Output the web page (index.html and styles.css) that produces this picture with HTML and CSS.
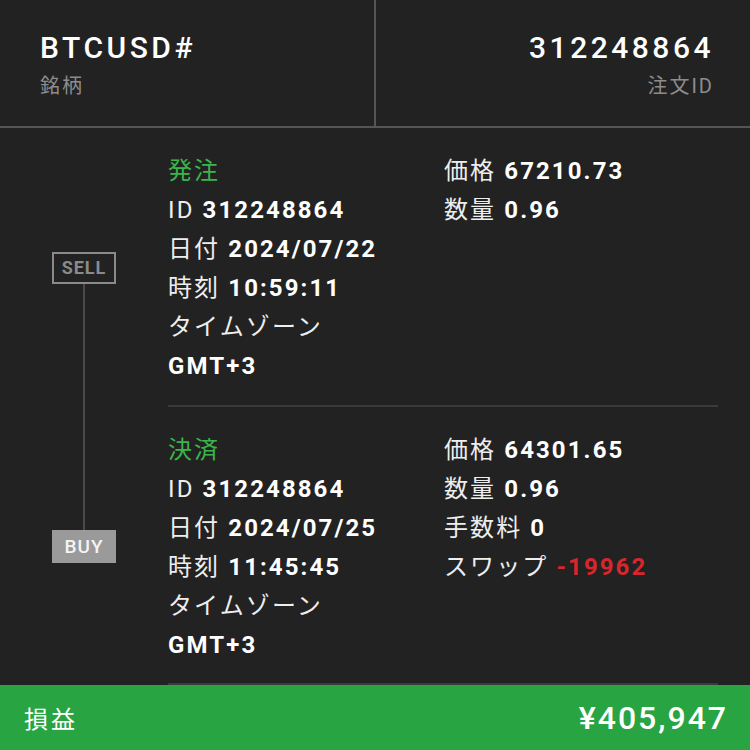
FILE: index.html
```html
<!DOCTYPE html>
<html lang="ja">
<head>
    <meta charset="UTF-8">
    <meta name="viewport" content="width=device-width, initial-scale=1.0">
    <title>注文詳細</title>
    <link rel="stylesheet" href="styles.css">
</head>
<body>
    <div class="order-card">
        <header class="summary">
            <div class="summary-cell">
                <div class="summary-value">BTCUSD#</div>
                <div class="summary-label">銘柄</div>
            </div>
            <div class="summary-cell summary-cell-right">
                <div class="summary-value">312248864</div>
                <div class="summary-label">注文ID</div>
            </div>
        </header>

        <section class="deal deal-open">
            <div class="deal-side">
                <span class="side-tag side-sell">SELL</span>
            </div>
            <div class="deal-body">
                <ul class="deal-col">
                    <li class="deal-title">発注</li>
                    <li>ID <b>312248864</b></li>
                    <li>日付 <b>2024/07/22</b></li>
                    <li>時刻 <b>10:59:11</b></li>
                    <li>タイムゾーン</li>
                    <li><b>GMT+3</b></li>
                </ul>
                <ul class="deal-col">
                    <li>価格 <b>67210.73</b></li>
                    <li>数量 <b>0.96</b></li>
                </ul>
            </div>
        </section>

        <section class="deal deal-close">
            <div class="deal-side">
                <span class="side-tag side-buy">BUY</span>
            </div>
            <div class="deal-body">
                <ul class="deal-col">
                    <li class="deal-title">決済</li>
                    <li>ID <b>312248864</b></li>
                    <li>日付 <b>2024/07/25</b></li>
                    <li>時刻 <b>11:45:45</b></li>
                    <li>タイムゾーン</li>
                    <li><b>GMT+3</b></li>
                </ul>
                <ul class="deal-col">
                    <li>価格 <b>64301.65</b></li>
                    <li>数量 <b>0.96</b></li>
                    <li>手数料 <b>0</b></li>
                    <li>スワップ <b class="negative">-19962</b></li>
                </ul>
            </div>
        </section>

        <footer class="profit-bar">
            <span class="profit-label">損益</span>
            <span class="profit-value">¥405,947</span>
        </footer>
    </div>
</body>
</html>
```

FILE: styles.css
```css
* {
    margin: 0;
    padding: 0;
    box-sizing: border-box;
}

body {
    background-color: #222222;
    color: #f0f0f0;
    font-family: Roboto, "Noto Sans CJK JP", sans-serif;
}

.order-card {
    width: 750px;
    height: 750px;
    display: flex;
    flex-direction: column;
}

/* Header: symbol + order id */
.summary {
    display: flex;
    height: 128px;
    border-bottom: 2px solid #555555;
}

.summary-cell {
    width: 374px;
    padding: 30px 0 0 40px;
}

.summary-cell-right {
    flex: 1;
    border-left: 2px solid #555555;
    padding: 30px 36px 0 0;
    text-align: right;
}

.summary-value {
    font-size: 30px;
    line-height: 36px;
    font-weight: 500;
    letter-spacing: 3.5px;
    color: #ffffff;
}

.summary-label {
    margin-top: 7px;
    font-size: 20px;
    line-height: 26px;
    letter-spacing: 2px;
    color: #8c8c8c;
}

/* Deal sections */
.deal {
    display: flex;
}

.deal-side {
    width: 168px;
    display: flex;
    flex-direction: column;
    align-items: center;
}

.deal-side::before,
.deal-side::after {
    content: "";
    flex: 1;
    width: 2px;
}

.deal-open .deal-side::after,
.deal-close .deal-side::before {
    background-color: #4a4a4a;
}

.side-tag {
    width: 64px;
    display: flex;
    align-items: center;
    justify-content: center;
    font-size: 18px;
    font-weight: 700;
    letter-spacing: 1px;
}

.side-sell {
    height: 32px;
    border: 2px solid #8a8a8a;
    color: #8a8a8a;
}

.side-buy {
    height: 33px;
    background-color: #9a9a9a;
    color: #f4f4f4;
    font-size: 19px;
    font-weight: 500;
}

.deal-body {
    flex: 1;
    margin-right: 32px;
    display: grid;
    grid-template-columns: 276px 1fr;
    padding: 24px 0 19px;
    border-bottom: 2px solid #3a3a3a;
}

.deal-close .deal-body {
    padding-bottom: 18px;
}

.deal-col {
    list-style: none;
    font-size: 24px;
    line-height: 39px;
    letter-spacing: 2.1px;
    color: #eeeeee;
}

.deal-col b {
    font-weight: 700;
    color: #ffffff;
}

.deal-title {
    color: #3cb44b;
}

.deal-col .negative {
    color: #d8262c;
}

/* Profit footer */
.profit-bar {
    flex: 1;
    display: flex;
    justify-content: space-between;
    align-items: center;
    padding: 0 22px 0 24px;
    background-color: #29a443;
    color: #ffffff;
}

.profit-label {
    font-size: 24px;
    letter-spacing: 3px;
}

.profit-value {
    font-size: 32px;
    font-weight: 500;
    letter-spacing: 2px;
}
```
